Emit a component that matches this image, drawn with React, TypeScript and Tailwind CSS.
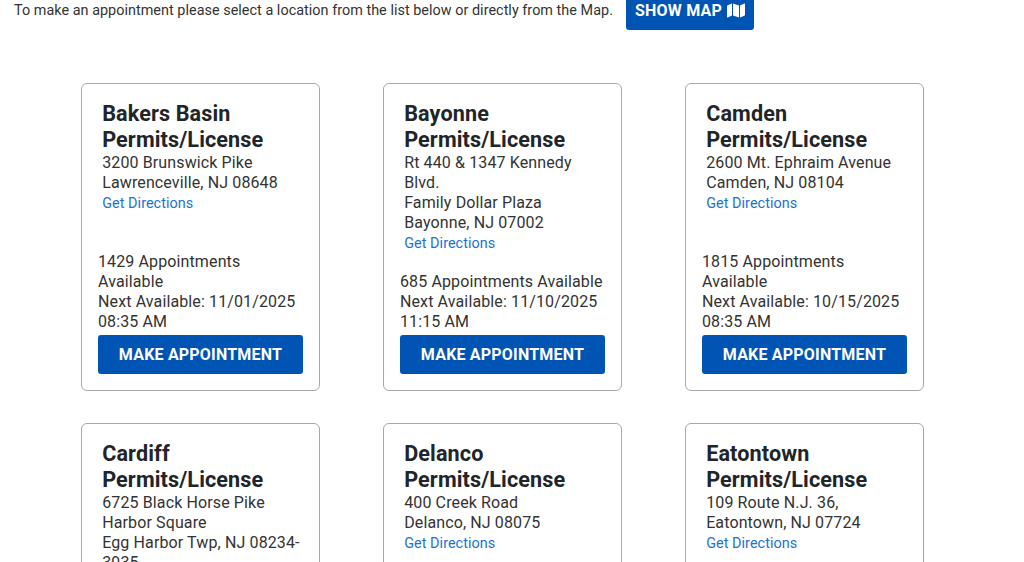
import { FaMap } from 'react-icons/fa'

const locations = [
  {
    name: 'Bakers Basin',
    address: ['3200 Brunswick Pike', 'Lawrenceville, NJ 08648'],
    count: '1429 Appointments Available',
    next: 'Next Available: 11/01/2025 08:35 AM',
  },
  {
    name: 'Bayonne',
    address: ['Rt 440 & 1347 Kennedy Blvd.', 'Family Dollar Plaza', 'Bayonne, NJ 07002'],
    count: '685 Appointments Available',
    next: 'Next Available: 11/10/2025 11:15 AM',
  },
  {
    name: 'Camden',
    address: ['2600 Mt. Ephraim Avenue', 'Camden, NJ 08104'],
    count: '1815 Appointments Available',
    next: 'Next Available: 10/15/2025 08:35 AM',
  },
  {
    name: 'Cardiff',
    address: ['6725 Black Horse Pike', 'Harbor Square', 'Egg Harbor Twp, NJ 08234-3935'],
    count: '1200 Appointments Available',
    next: 'Next Available: 10/20/2025 08:35 AM',
  },
  {
    name: 'Delanco',
    address: ['400 Creek Road', 'Delanco, NJ 08075'],
    count: '950 Appointments Available',
    next: 'Next Available: 10/22/2025 08:35 AM',
  },
  {
    name: 'Eatontown',
    address: ['109 Route N.J. 36,', 'Eatontown, NJ 07724'],
    count: '1100 Appointments Available',
    next: 'Next Available: 10/24/2025 08:35 AM',
  },
]

function LocationCard({ location }: { location: (typeof locations)[number] }) {
  return (
    <div className="flex h-[308px] w-[239.3px] shrink-0 flex-col rounded-[6px] border border-[#a8a8a8] bg-white px-[16px] pb-[16px] pt-[17px]">
      <div className="pl-[4.2px] pr-[2px]">
        <h2 className="text-[21.6px] font-bold leading-[26px] text-[#212529]">
          {location.name}
          <br />
          Permits/License
        </h2>
        {location.address.map((line) => (
          <div key={line}>{line}</div>
        ))}
        <a href="#" className="block pt-[0.5px] text-[14.4px] tracking-[0.05px] text-[#1a73d0]">
          Get Directions
        </a>
      </div>
      <div className="mt-auto">
        <div>{location.count}</div>
        <div>{location.next}</div>
        <button
          type="button"
          className="mt-[3px] h-[39px] w-[205px] rounded-[3px] bg-[#0054b4] text-[16px] font-bold tracking-[0.2px] text-white"
        >
          MAKE APPOINTMENT
        </button>
      </div>
    </div>
  )
}

export default function App() {
  return (
    <div className="h-[562px] overflow-hidden bg-white font-['Roboto',sans-serif] text-[16px] leading-[20px] tracking-[0.12px] text-[#333]">
      <div className="flex h-[30px] items-start pl-[14px]">
        <p className="mt-[1px] w-[612px] text-[14.4px] tracking-[0.03px]">
          To make an appointment please select a location from the list below or directly from the Map.
        </p>
        <button
          type="button"
          className="mt-[-9px] flex h-[39px] w-[128px] items-center justify-center gap-[5px] rounded-[3px] bg-[#0054b4] text-[16px] font-bold tracking-[0.2px] text-white"
        >
          SHOW MAP
          <FaMap className="h-[17px] w-[18px]" />
        </button>
      </div>
      <div className="mt-[53px] flex flex-wrap gap-x-[62.7px] gap-y-[32px] pl-[81px]">
        {locations.map((location) => (
          <LocationCard key={location.name} location={location} />
        ))}
      </div>
    </div>
  )
}
